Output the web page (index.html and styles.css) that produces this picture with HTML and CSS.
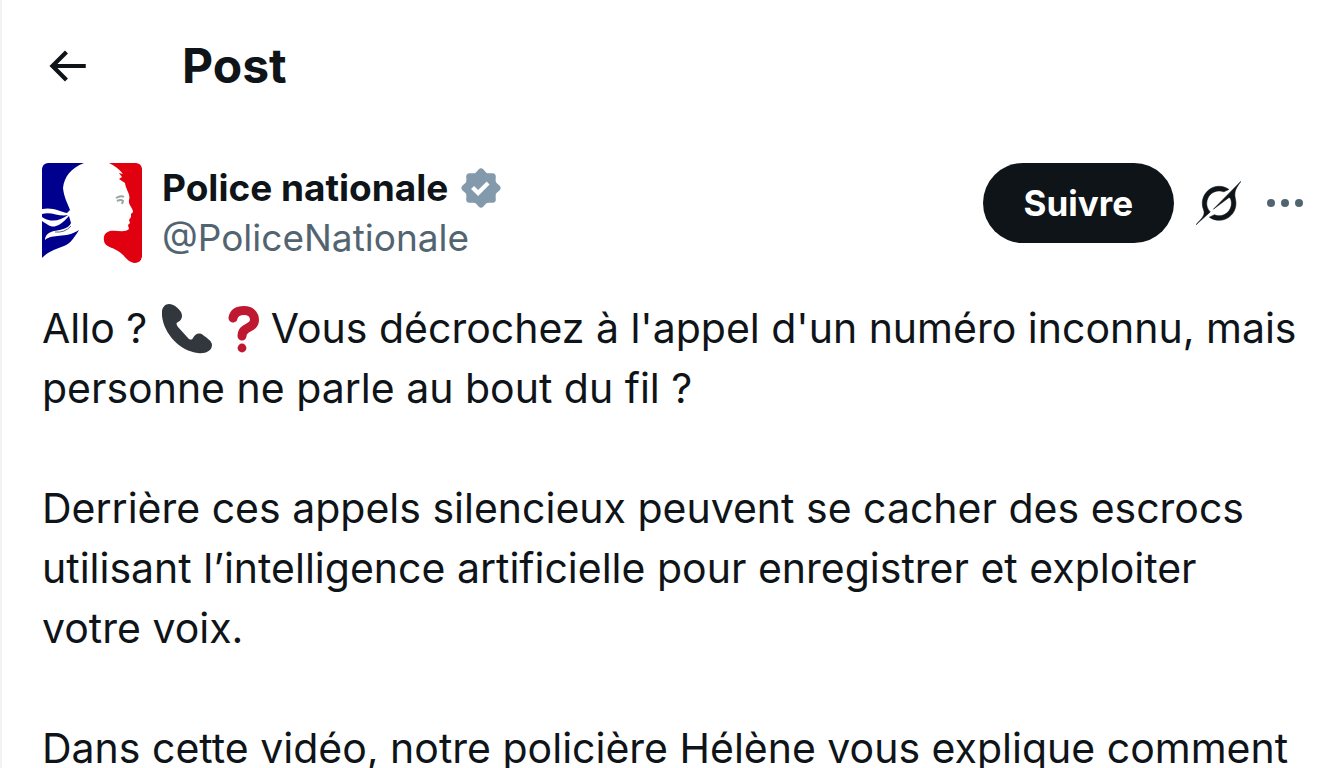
FILE: index.html
```html
<!DOCTYPE html>
<html lang="fr">
<head>
<meta charset="utf-8">
<meta name="viewport" content="width=device-width, initial-scale=1">
<title>Post</title>
<link rel="stylesheet" href="styles.css">
</head>
<body>
<main class="column">
  <header class="topbar">
    <button class="icon-button" type="button" aria-label="Retour">
      <svg class="back-icon" viewBox="0 0 24 24" aria-hidden="true"><path d="M7.414 13l5.043 5.04-1.414 1.42L3.586 12l7.457-7.46 1.414 1.42L7.414 11H21v2H7.414z"/></svg>
    </button>
    <h1 class="title">Post</h1>
  </header>
  <article class="post">
    <div class="author">
      <svg class="avatar" viewBox="0 0 100 100" role="img" aria-label="Police nationale">
        <path fill="#fff" d="M0 0h100v100H0z"/>
        <path fill="#00008f" d="M0 5Q0 0 5 0H42C29 5 22 14 21 25C22 35 26 41 28 47L25 50C17 48 11 44 0 46z"/>
        <path fill="#00008f" d="M0 51C9 48 17 54 26 52C18 58 9 60 0 54z"/>
        <path fill="#00008f" d="M0 58C5 61 9 65 14 63C20 61 23 57 27 53L29 60C27 65 20 67 12 68C7 69 3 72 3 77C11 70 23 76 37 67C32 75 28 81 22 83C14 86 7 88 0 95z"/>
        <path fill="none" stroke="#5c6a78" stroke-width="1" d="M13 69Q23 70 29 63"/>
        <path fill="#e1000f" d="M67 0H95Q100 0 100 5V94Q99 100 92 100C84 98 83 92 76 88C70 84 63 84 62 78C61 72 64 69 68 68C75 67 83 70 87 66L86 62L88 60L87 57L89 54V51L91 49C91 45 86 42 87 37C89 32 84 27 83 20L77 16L80 14L77 10L81 11C77 6 73 3 67 0z"/>
        <path fill="none" stroke="#9aa5a5" stroke-width="2" d="M74 35q5-3 8-1M75 38q4-2 6 0l-1 3"/>
      </svg>
      <div class="identity">
        <div class="name-row">
          <a class="name" href="#">Police nationale</a>
          <svg class="badge" viewBox="0 0 22 22" role="img" aria-label="Compte certifié"><path d="M12.05 2.056c-.568-.608-1.532-.608-2.1 0l-1.393 1.49c-.284.303-.685.47-1.1.455L5.42 3.932c-.832-.028-1.514.654-1.486 1.486l.069 2.039c.014.415-.152.816-.456 1.1l-1.49 1.392c-.608.568-.608 1.533 0 2.101l1.49 1.393c.304.284.47.684.456 1.1l-.07 2.038c-.027.832.655 1.514 1.487 1.486l2.038-.069c.415-.014.816.152 1.1.455l1.392 1.49c.569.609 1.533.609 2.102 0l1.393-1.49c.283-.303.684-.47 1.099-.455l2.038.069c.832.028 1.515-.654 1.486-1.486L18 14.542c-.015-.415.152-.815.455-1.099l1.49-1.393c.608-.568.608-1.533 0-2.101l-1.49-1.393c-.303-.283-.47-.684-.455-1.1l.068-2.038c.029-.832-.654-1.514-1.486-1.486l-2.038.07c-.415.013-.816-.153-1.1-.456zm-5.817 9.367l1.429-1.371 1.975 1.961 4.072-4.07 1.38 1.4-5.47 5.44z"/></svg>
        </div>
        <a class="handle" href="#">@PoliceNationale</a>
      </div>
      <div class="actions">
        <button class="follow" type="button">Suivre</button>
        <button class="icon-button" type="button" aria-label="Grok">
          <svg class="grok-icon" viewBox="0 0 33 32" aria-hidden="true"><path stroke="currentColor" stroke-width=".4" d="M12.745 20.54l10.97-8.19c.539-.4 1.307-.244 1.564.38 1.349 3.288.746 7.241-1.938 9.955-2.683 2.714-6.417 3.31-9.83 1.954l-3.728 1.745c5.347 3.697 11.84 2.782 15.898-1.324 3.219-3.255 4.216-7.692 3.284-11.693l.008.009c-1.351-5.878.332-8.227 3.782-13.031L33 0l-4.54 4.59v-.014L12.743 20.544m-2.263 1.987c-3.837-3.707-3.175-9.446.1-12.755 2.42-2.449 6.388-3.448 9.852-1.979l3.72-1.737c-.67-.49-1.53-1.017-2.515-1.387-4.455-1.854-9.789-.931-13.41 2.728-3.483 3.523-4.579 8.94-2.697 13.561 1.405 3.454-.899 5.898-3.22 8.364C1.49 30.2.666 31.074 0 32l10.478-9.466"/></svg>
        </button>
        <button class="icon-button" type="button" aria-label="Plus">
          <svg class="more-icon" viewBox="0 0 36 8" aria-hidden="true"><circle cx="4" cy="4" r="4"/><circle cx="18" cy="4" r="4"/><circle cx="32" cy="4" r="4"/></svg>
        </button>
      </div>
    </div>
    <div class="text">
      <p class="paragraph">Allo ? <svg class="emoji" viewBox="0 0 50 50" role="img" aria-label="téléphone"><path fill="#31373d" d="M7 0C2 0-1 5 0 12C2 30 18 47 36 49C43 50 50 47 50 41C50 37 45 34 41 31C37 28 33 30 31 34C30 36 28 36 26 34L16 23C14 20 14 19 16 18C20 16 21 12 19 8C16 4 12 0 7 0z"/></svg><svg class="emoji" viewBox="0 0 50 50" role="img" aria-label="point d'interrogation"><path fill="none" stroke="#be1931" stroke-width="9" stroke-linecap="round" stroke-linejoin="round" d="M15 14C16 9 20 6.500 26 6.500C33 6.500 36.500 11 36.500 16C36.500 25 24 22 24 32"/><circle cx="24" cy="44" r="4.400" fill="#be1931"/></svg>Vous décrochez à l'appel d'un numéro inconnu, mais<br>personne ne parle au bout du fil ?</p>
      <p class="paragraph">Derrière ces appels silencieux peuvent se cacher des escrocs<br>utilisant l’intelligence artificielle pour enregistrer et exploiter<br>votre voix.</p>
      <p class="paragraph">Dans cette vidéo, notre policière Hélène vous explique comment</p>
    </div>
  </article>
</main>
</body>
</html>
```

FILE: styles.css
```css
* { box-sizing: border-box; }

body {
  margin: 0;
  height: 100vh;
  overflow: hidden;
  background: #fff;
  color: #0f1419;
  font-family: Inter, sans-serif;
}

.column {
  min-height: 100vh;
  border-left: 2px solid #eff3f4;
}

.topbar {
  display: flex;
  align-items: center;
  gap: 90px;
  height: 132px;
  padding: 0 40px;
}

.icon-button {
  display: flex;
  padding: 0;
  border: 0;
  background: none;
  color: inherit;
  cursor: pointer;
}

.back-icon { width: 50px; height: 50px; fill: currentColor; }

.title {
  margin: 0;
  font-size: 48px;
  line-height: 60px;
  font-weight: 700;
}

.post { padding: 31px 39px 0 40px; }

.author {
  display: flex;
  align-items: flex-start;
  gap: 20px;
}

.avatar {
  width: 100px;
  height: 100px;
  border-radius: 6px;
  flex: none;
}

.identity { flex: 1; }

.name-row {
  display: flex;
  align-items: center;
  gap: 10px;
}

.name,
.handle {
  font-size: 37px;
  line-height: 50px;
  text-decoration: none;
}

.name { color: #0f1419; font-weight: 700; }
.handle { color: #536471; }
.badge { width: 46px; height: 46px; fill: #829aab; }

.actions {
  display: flex;
  align-items: center;
  gap: 22px;
}

.follow {
  height: 80px;
  padding: 0 41px;
  border: 0;
  border-radius: 40px;
  background: #0f1419;
  color: #fff;
  font: 700 35px/50px Inter, sans-serif;
  cursor: pointer;
}

.grok-icon { width: 45px; height: 44px; fill: currentColor; }
.more-icon { width: 36px; height: 8px; margin-left: 4px; fill: #536471; }

.text {
  padding-top: 35px;
  font-size: 41px;
  line-height: 60px;
  white-space: nowrap;
}

.paragraph { margin: 0 0 60px; }

.emoji {
  width: 50px;
  height: 50px;
  margin: 0 3px;
  vertical-align: -11px;
}
```
